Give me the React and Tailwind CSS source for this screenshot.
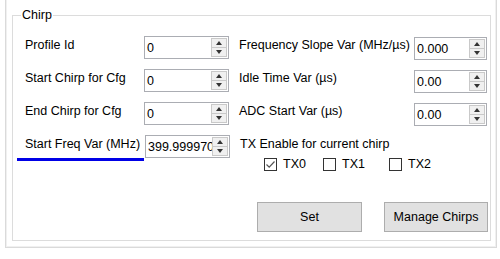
import { useState } from 'react'

const font = { fontFamily: '"Liberation Sans", Arial, sans-serif' }

function SpinBox({ value, width }) {
  return (
    <div className={`flex h-[23px] ${width} items-stretch border border-[#abadb3] bg-white`}>
      <div className="flex-1 overflow-hidden whitespace-nowrap pl-[2px] pt-[4px] text-[12.5px] leading-[14px] text-black">
        {value}
      </div>
      <div className="my-[1px] mr-[1px] flex w-[16px] flex-col">
        <div className="flex flex-1 items-center justify-center border border-[#c9c9c9] bg-[#f0f0f0]">
          <div className="h-0 w-0 border-x-[3.5px] border-b-[4px] border-x-transparent border-b-[#333]" />
        </div>
        <div className="flex flex-1 items-center justify-center border border-t-0 border-[#c9c9c9] bg-[#f0f0f0]">
          <div className="h-0 w-0 border-x-[3.5px] border-t-[4px] border-x-transparent border-t-[#333]" />
        </div>
      </div>
    </div>
  )
}

function Label({ children, className = '' }) {
  return <div className={`mt-[2px] whitespace-nowrap text-[12.5px] leading-[14px] text-black ${className}`}>{children}</div>
}

function Check({ label, checked, onToggle, className = '' }) {
  return (
    <button type="button" onClick={onToggle} className={`flex h-[14px] items-center gap-[6px] leading-[14px] ${className}`}>
      <span className="flex h-[13px] w-[13px] items-center justify-center border border-[#333] bg-white">
        {checked && (
          <svg width="11" height="11" viewBox="0 0 11 11">
            <polyline points="1.5,5.5 4.2,8.2 9.5,2.5" fill="none" stroke="#555" strokeWidth="1.2" />
          </svg>
        )}
      </span>
      <span className="text-[12.5px] leading-[14px] text-black">{label}</span>
    </button>
  )
}

export default function App() {
  const [tx, setTx] = useState([true, false, false])
  const toggle = (i) => setTx((t) => t.map((v, j) => (j === i ? !v : v)))

  const rows = [
    ['Profile Id', '0', 'Frequency Slope Var (MHz/µs)', '0.000'],
    ['Start Chirp for Cfg', '0', 'Idle Time Var (µs)', '0.00'],
    ['End Chirp for Cfg', '0', 'ADC Start Var (µs)', '0.00'],
  ]

  return (
    <div className="h-[259px] w-[500px] overflow-hidden bg-white" style={font}>
      <div className="ml-[5px] h-[248px] w-[492px] border border-t-0 border-[#dadada]">
        <div className="h-full w-full border border-t-0 border-[#f0f0f0] pt-[15px]">
          <div className="ml-[5px] flex h-[226px] w-[479px] flex-col border border-[#dcdcdc]">
            <div className="-mt-[8px] ml-[8px] w-fit bg-white px-[1px] text-[12.5px] leading-[14px] text-black">
              Chirp
            </div>

            <div className="mt-[14px] flex flex-col gap-[9px]">
              {rows.map(([l, lv, r, rv]) => (
                <div key={l} className="flex items-start">
                  <Label className="ml-[12px] w-[119px]">{l}</Label>
                  <SpinBox value={lv} width="w-[85px]" />
                  <Label className="ml-[10px] w-[175px]">{r}</Label>
                  <div className="mt-[1px]">
                    <SpinBox value={rv} width="w-[73px]" />
                  </div>
                </div>
              ))}

              <div className="flex items-start">
                <div className="ml-[4px] flex w-[128px] flex-col">
                  <Label className="pl-[8px]">Start Freq Var (MHz)</Label>
                  <div className="mt-[7px] h-[3px] w-[127px] bg-[#0000e6]" />
                </div>
                <SpinBox value="399.999970" width="w-[85px]" />
                <div className="ml-[10px] flex flex-col">
                  <Label>TX Enable for current chirp</Label>
                  <div className="ml-[24px] mt-[6px] flex">
                    <Check label="TX0" checked={tx[0]} onToggle={() => toggle(0)} className="w-[59px]" />
                    <Check label="TX1" checked={tx[1]} onToggle={() => toggle(1)} className="w-[66px]" />
                    <Check label="TX2" checked={tx[2]} onToggle={() => toggle(2)} />
                  </div>
                </div>
              </div>
            </div>

            <div className="ml-[244px] mt-[31px] flex gap-[22px]">
              <button type="button" className="h-[30px] w-[105px] border border-[#adadad] bg-[#e1e1e1] text-[12.5px] text-black">
                Set
              </button>
              <button type="button" className="h-[30px] w-[104px] border border-[#adadad] bg-[#e1e1e1] text-[12.5px] text-black">
                Manage Chirps
              </button>
            </div>
          </div>
        </div>
      </div>
    </div>
  )
}
